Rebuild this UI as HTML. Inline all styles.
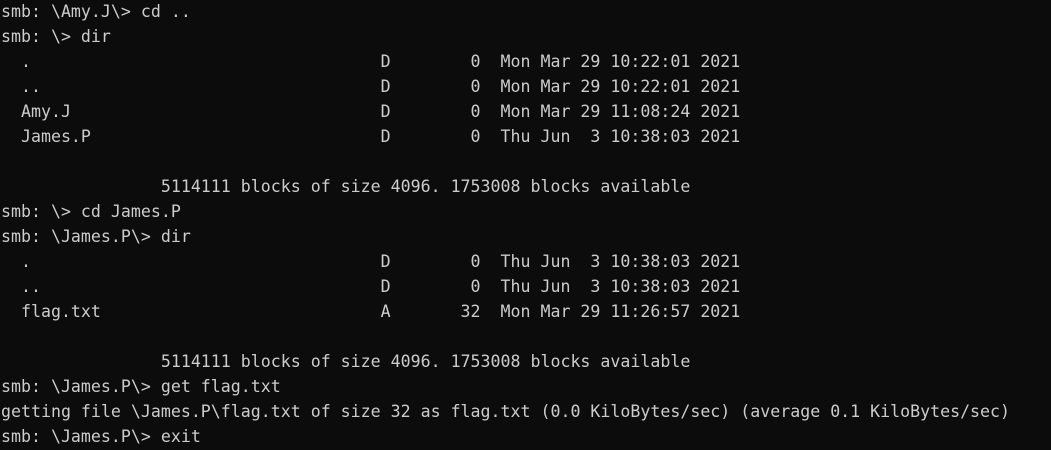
<!DOCTYPE html>
<html><head><meta charset="utf-8"><style>
html,body{margin:0;padding:0;background:#0c0c0c;width:1051px;height:450px;overflow:hidden}
pre{margin:0;padding:0 0 0 1px;color:#cccccc;font-family:"DejaVu Sans Mono","Liberation Mono",monospace;font-size:16.6px;line-height:25px;position:relative;top:-1px}
</style></head><body><pre>smb: \Amy.J\&gt; cd ..
smb: \&gt; dir
  .                                   D        0  Mon Mar 29 10:22:01 2021
  ..                                  D        0  Mon Mar 29 10:22:01 2021
  Amy.J                               D        0  Mon Mar 29 11:08:24 2021
  James.P                             D        0  Thu Jun  3 10:38:03 2021

                5114111 blocks of size 4096. 1753008 blocks available
smb: \&gt; cd James.P
smb: \James.P\&gt; dir
  .                                   D        0  Thu Jun  3 10:38:03 2021
  ..                                  D        0  Thu Jun  3 10:38:03 2021
  flag.txt                            A       32  Mon Mar 29 11:26:57 2021

                5114111 blocks of size 4096. 1753008 blocks available
smb: \James.P\&gt; get flag.txt
getting file \James.P\flag.txt of size 32 as flag.txt (0.0 KiloBytes/sec) (average 0.1 KiloBytes/sec)
smb: \James.P\&gt; exit
</pre></body></html>
